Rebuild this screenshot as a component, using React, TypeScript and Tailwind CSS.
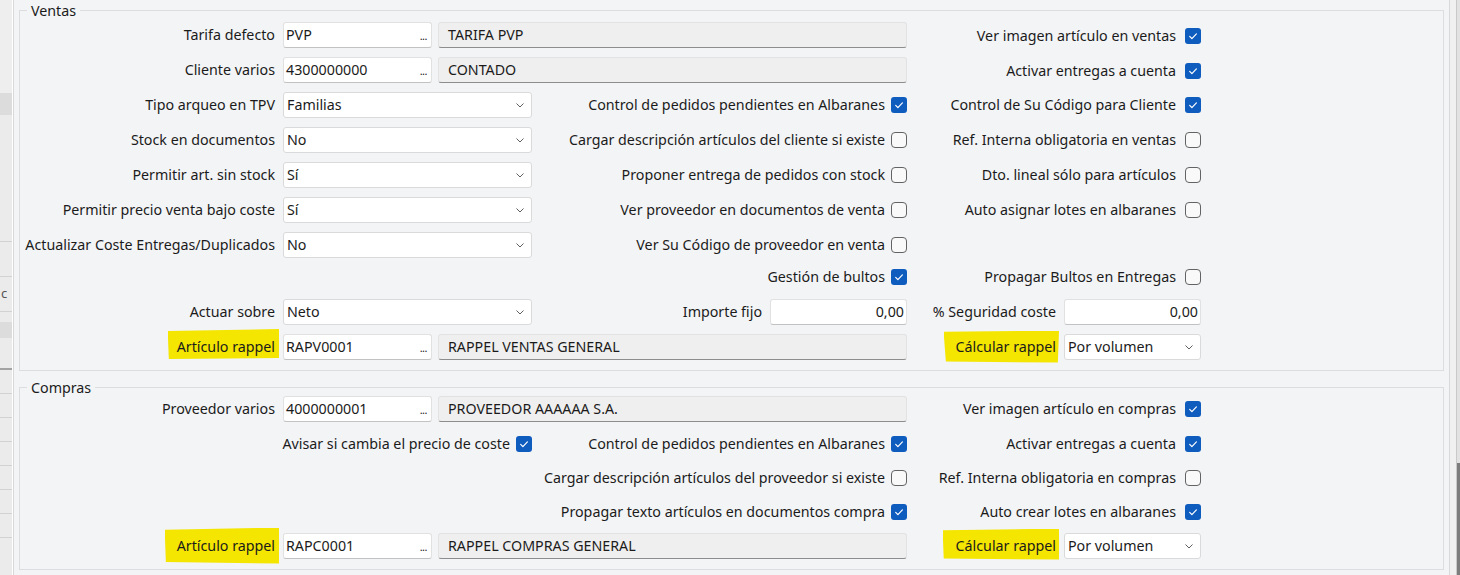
import React from "react";

type Kids = { children?: React.ReactNode };

function Check({ on }: { on?: boolean }) {
  if (on)
    return (
      <span className="flex h-4 w-4 shrink-0 items-center justify-center rounded-[3px] bg-[#0f5cbf]">
        <svg viewBox="0 0 16 16" className="h-4 w-4" fill="none" stroke="white" strokeWidth={1.2} strokeLinecap="round" strokeLinejoin="round">
          <path d="M4.7 8.4l2.2 2.2 4.5-4.7" />
        </svg>
      </span>
    );
  return <span className="h-4 w-4 shrink-0 rounded-[4px] border border-[#636363] bg-[#f9f9f9]" />;
}

function Label({ children }: Kids) {
  return <div className="w-[255px] shrink-0 whitespace-nowrap text-right">{children}</div>;
}

function TextBox({ value }: { value: string }) {
  return (
    <div className="ml-[8px] flex h-[26px] w-[149px] shrink-0 items-center justify-between rounded-[3px] border border-[#e1e1e1] border-b-[#c2c2c2] bg-white pl-[2px] pr-[4px]">
      <span>{value}</span>
      <span className="pt-[3px] text-[11px] tracking-[-0.5px]">...</span>
    </div>
  );
}

function Desc({ value }: { value: string }) {
  return (
    <div className="ml-[6px] flex h-[26px] w-[469px] shrink-0 items-center rounded-[3px] border border-[#e2e2e2] border-b-[#8d8d8d] bg-[#efefef] pl-[9px]">
      {value}
    </div>
  );
}

function Chevron() {
  return (
    <svg viewBox="0 0 10 10" className="h-[10px] w-[10px]" fill="none" stroke="#5f5f5f" strokeWidth={1}>
      <path d="M1.5 3.5 5 7l3.5-3.5" />
    </svg>
  );
}

function Select({ value, small }: { value: string; small?: boolean }) {
  return (
    <div
      className={
        small
          ? "flex h-[26px] w-[137px] shrink-0 items-center justify-between rounded-[3px] border border-[#dadada] bg-white pl-[3px] pr-[6px]"
          : "ml-[8px] flex h-[26px] w-[249px] shrink-0 items-center justify-between rounded-[3px] border border-[#dadada] bg-white pl-[3px] pr-[6px]"
      }
    >
      <span>{value}</span>
      <Chevron />
    </div>
  );
}

function Num({ value }: { value: string }) {
  return (
    <div className="ml-[8px] flex h-[26px] w-[137px] shrink-0 items-center justify-end rounded-[3px] border border-[#e1e1e1] border-b-[#c2c2c2] bg-white pr-[2px]">
      {value}
    </div>
  );
}

function Mid({ children, on }: Kids & { on?: boolean }) {
  return (
    <div className="flex w-[375px] shrink-0 items-center justify-end gap-[6px] whitespace-nowrap">
      {children}
      <Check on={on} />
    </div>
  );
}

function Right({ children, on, low }: Kids & { on?: boolean; low?: boolean }) {
  return (
    <div
      className={
        low
          ? "flex w-[294px] shrink-0 items-center justify-end gap-[9px] whitespace-nowrap pt-[3px]"
          : "flex w-[294px] shrink-0 items-center justify-end gap-[9px] whitespace-nowrap"
      }
    >
      {children}
      <Check on={on} />
    </div>
  );
}

function Group({ title, children, className }: Kids & { title: string; className: string }) {
  return (
    <div className={className}>
      <span className="absolute -top-[10px] left-[7px] bg-[#f3f4f6] px-[4px] leading-[20px]">{title}</span>
      {children}
    </div>
  );
}

function Row({ children, h }: Kids & { h: string }) {
  return <div className={h}>{children}</div>;
}

function LeftStrip() {
  return (
    <div className="flex w-[12px] shrink-0 flex-col bg-[#ebebeb]">
      <div className="h-[93px] bg-[#eeeeee]" />
      <div className="h-[22px] bg-[#dcdcdc]" />
      <div className="h-[127px] border-b border-[#d2d2d2]" />
      <div className="h-[35px] border-b border-[#d2d2d2]" />
      <div className="h-[35px] overflow-hidden border-b border-[#d2d2d2] pl-[1px] text-[13px] leading-[32px] text-[#555]">c</div>
      <div className="h-[10px]" />
      <div className="h-[16px] bg-[#dcdcdc]" />
      <div className="h-[32px] border-b-2 border-[#a3a3a3]" />
      <div className="h-[24px] border-b border-[#d2d2d2]" />
      <div className="h-[24px] border-b border-[#d2d2d2]" />
      <div className="h-[24px] border-b border-[#d2d2d2]" />
      <div className="h-[24px] border-b border-[#d2d2d2]" />
      <div className="h-[24px] border-b border-[#d2d2d2]" />
      <div className="h-[24px] border-b border-[#d2d2d2]" />
      <div className="h-[24px] border-b border-[#d2d2d2]" />
      <div className="flex-1" />
    </div>
  );
}

function RightStrip() {
  return (
    <div className="flex w-[10px] shrink-0">
      <div className="w-[6px] bg-[#f0f0f0]" />
      <div className="w-[1px] bg-[#c9c9c9]" />
      <div className="flex w-[3px] flex-col bg-[#e2e2e2]">
        <div className="h-[463px]" />
        <div className="flex-1 bg-[#7d7d7d]" />
      </div>
    </div>
  );
}

export default function App() {
  return (
    <div className="flex h-[575px] w-[1460px] overflow-hidden bg-[#f3f4f6] font-['Noto_Sans',sans-serif] text-[14.25px] text-[#1b1b1b]">
      <LeftStrip />
      <div className="w-[1px] shrink-0 bg-white" />
      <div className="flex w-[1437px] shrink-0 flex-col border-x border-[#d9d9d9] bg-[#f3f4f6] px-[5px]">
        <Group title="Ventas" className="relative mt-[10px] border border-[#dcdde0] pb-[6px] pt-[6px]">
          <Row h="flex h-[35px] items-center">
            <Label>Tarifa defecto</Label>
            <TextBox value="PVP" />
            <Desc value="TARIFA PVP" />
            <Right on low>Ver imagen artículo en ventas</Right>
          </Row>
          <Row h="flex h-[35px] items-center">
            <Label>Cliente varios</Label>
            <TextBox value="4300000000" />
            <Desc value="CONTADO" />
            <Right on low>Activar entregas a cuenta</Right>
          </Row>
          <Row h="flex h-[35px] items-center">
            <Label>Tipo arqueo en TPV</Label>
            <Select value="Familias" />
            <Mid on>Control de pedidos pendientes en Albaranes</Mid>
            <Right on>Control de Su Código para Cliente</Right>
          </Row>
          <Row h="flex h-[35px] items-center">
            <Label>Stock en documentos</Label>
            <Select value="No" />
            <Mid>Cargar descripción artículos del cliente si existe</Mid>
            <Right>Ref. Interna obligatoria en ventas</Right>
          </Row>
          <Row h="flex h-[35px] items-center">
            <Label>Permitir art. sin stock</Label>
            <Select value="Sí" />
            <Mid>Proponer entrega de pedidos con stock</Mid>
            <Right>Dto. lineal sólo para artículos</Right>
          </Row>
          <Row h="flex h-[35px] items-center">
            <Label>Permitir precio venta bajo coste</Label>
            <Select value="Sí" />
            <Mid>Ver proveedor en documentos de venta</Mid>
            <Right>Auto asignar lotes en albaranes</Right>
          </Row>
          <Row h="flex h-[35px] items-center">
            <Label>Actualizar Coste Entregas/Duplicados</Label>
            <Select value="No" />
            <Mid>Ver Su Código de proveedor en venta</Mid>
          </Row>
          <Row h="flex h-[29px] items-center">
            <div className="w-[512px] shrink-0" />
            <Mid on>Gestión de bultos</Mid>
            <Right>Propagar Bultos en Entregas</Right>
          </Row>
          <Row h="mt-[3px] flex h-[35px] items-center">
            <Label>Actuar sobre</Label>
            <Select value="Neto" />
            <div className="flex w-[375px] shrink-0 items-center justify-end">
              Importe fijo
              <Num value="0,00" />
            </div>
            <div className="flex w-[294px] shrink-0 items-center justify-end whitespace-nowrap">
              % Seguridad coste
              <Num value="0,00" />
            </div>
          </Row>
          <Row h="flex h-[35px] items-center">
            <Label>
              <span className="-mr-[4px] -mt-[5px] inline-flex h-[30px] items-center bg-[#f4e600] pl-[9px] pr-[4px] pt-[5px] [clip-path:polygon(0_7%,100%_0,100%_97%,1%_100%)]">
                Artículo rappel
              </span>
            </Label>
            <TextBox value="RAPV0001" />
            <Desc value="RAPPEL VENTAS GENERAL" />
            <div className="flex w-[294px] shrink-0 items-center justify-end">
              <span className="mr-[5px] inline-flex h-[32px] items-center bg-[#f4e600] pl-[12px] pr-[3px] [clip-path:polygon(0_4%,100%_0,99%_100%,2%_97%)]">
                Cálcular rappel
              </span>
              <Select value="Por volumen" small />
            </div>
          </Row>
        </Group>

        <Group title="Compras" className="relative mt-[16px] border border-[#dcdde0] pb-[6px] pt-[3px]">
          <Row h="flex h-[36px] items-center">
            <Label>Proveedor varios</Label>
            <TextBox value="4000000001" />
            <Desc value="PROVEEDOR AAAAAA S.A." />
            <Right on>Ver imagen artículo en compras</Right>
          </Row>
          <Row h="flex h-[34px] items-center">
            <div className="flex w-[512px] shrink-0 items-center justify-end gap-[6px] whitespace-nowrap">
              Avisar si cambia el precio de coste
              <Check on />
            </div>
            <Mid on>Control de pedidos pendientes en Albaranes</Mid>
            <Right on>Activar entregas a cuenta</Right>
          </Row>
          <Row h="flex h-[34px] items-center">
            <div className="w-[512px] shrink-0" />
            <Mid>Cargar descripción artículos del proveedor si existe</Mid>
            <Right>Ref. Interna obligatoria en compras</Right>
          </Row>
          <Row h="flex h-[33px] items-center">
            <div className="w-[512px] shrink-0" />
            <Mid on>Propagar texto artículos en documentos compra</Mid>
            <Right on>Auto crear lotes en albaranes</Right>
          </Row>
          <Row h="flex h-[35px] items-center">
            <Label>
              <span className="-mr-[4px] inline-flex h-[36px] items-center bg-[#f4e600] pl-[12px] pr-[4px] [clip-path:polygon(0_6%,100%_0,100%_100%,1%_96%)]">
                Artículo rappel
              </span>
            </Label>
            <TextBox value="RAPC0001" />
            <Desc value="RAPPEL COMPRAS GENERAL" />
            <div className="flex w-[294px] shrink-0 items-center justify-end">
              <span className="mr-[5px] -mt-[3px] inline-flex h-[31px] items-center bg-[#f4e600] pl-[13px] pr-[3px] pt-[3px] [clip-path:polygon(0_6%,100%_0,100%_100%,1%_97%)]">
                Cálcular rappel
              </span>
              <Select value="Por volumen" small />
            </div>
          </Row>
        </Group>
      </div>
      <RightStrip />
    </div>
  );
}
